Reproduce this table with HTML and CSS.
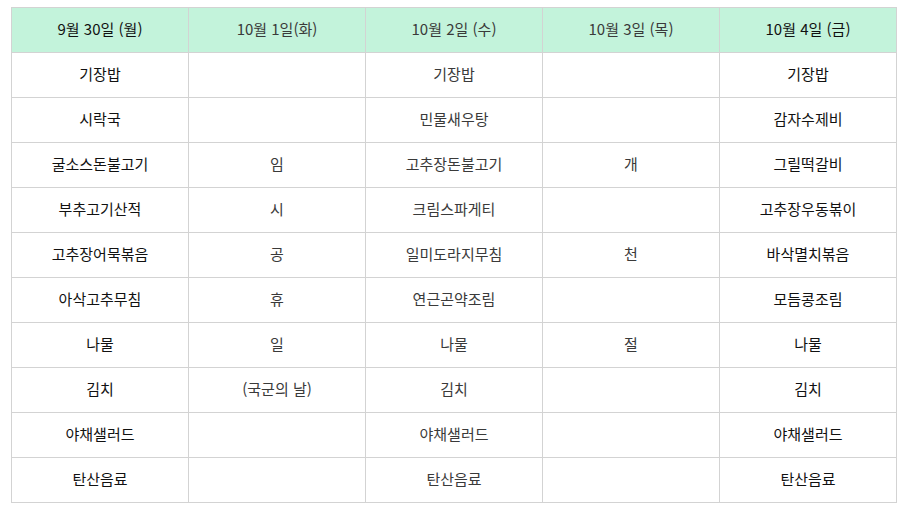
FILE: index.html
```html
<!DOCTYPE html>
<html lang="ko">
<head>
<meta charset="utf-8">
<link rel="stylesheet" href="styles.css">
</head>
<body>
<table class="menu">
  <colgroup>
    <col class="col"><col class="col"><col class="col"><col class="col"><col class="col">
  </colgroup>
  <thead>
    <tr>
      <th class="dark">9월 30일 (월)</th>
      <th>10월 1일(화)</th>
      <th>10월 2일 (수)</th>
      <th>10월 3일 (목)</th>
      <th class="dark">10월 4일 (금)</th>
    </tr>
  </thead>
  <tbody>
    <tr><td class="dark">기장밥</td><td></td><td>기장밥</td><td></td><td class="dark">기장밥</td></tr>
    <tr><td class="dark">시락국</td><td></td><td>민물새우탕</td><td></td><td class="dark">감자수제비</td></tr>
    <tr><td class="dark">굴소스돈불고기</td><td>임</td><td>고추장돈불고기</td><td>개</td><td class="dark">그릴떡갈비</td></tr>
    <tr><td class="dark">부추고기산적</td><td>시</td><td>크림스파게티</td><td></td><td class="dark">고추장우동볶이</td></tr>
    <tr><td class="dark">고추장어묵볶음</td><td>공</td><td>일미도라지무침</td><td>천</td><td class="dark">바삭멸치볶음</td></tr>
    <tr><td class="dark">아삭고추무침</td><td>휴</td><td>연근곤약조림</td><td></td><td class="dark">모듬콩조림</td></tr>
    <tr><td class="dark">나물</td><td>일</td><td>나물</td><td>절</td><td class="dark">나물</td></tr>
    <tr><td class="dark">김치</td><td>(국군의 날)</td><td>김치</td><td></td><td class="dark">김치</td></tr>
    <tr><td class="dark">야채샐러드</td><td></td><td>야채샐러드</td><td></td><td class="dark">야채샐러드</td></tr>
    <tr><td class="dark">탄산음료</td><td></td><td>탄산음료</td><td></td><td class="dark">탄산음료</td></tr>
  </tbody>
</table>
</body>
</html>
```

FILE: styles.css
```css
html, body {
  margin: 0;
  background: #ffffff;
}
body {
  padding: 7px 11px;
  font-family: "Noto Sans CJK KR", "Noto Sans", sans-serif;
  font-size: 15px;
}
.menu {
  border-collapse: collapse;
  width: 886px;
  table-layout: fixed;
}
.col {
  width: 20%;
}
.menu th,
.menu td {
  border: 1px solid #d3d3d3;
  height: 45px;
  padding: 0 0 3px;
  text-align: center;
  vertical-align: middle;
  color: #3a3a3a;
  font-weight: normal;
  box-sizing: border-box;
}
.menu th {
  background: #c3f3db;
}
.menu .dark {
  color: #111111;
}
```
